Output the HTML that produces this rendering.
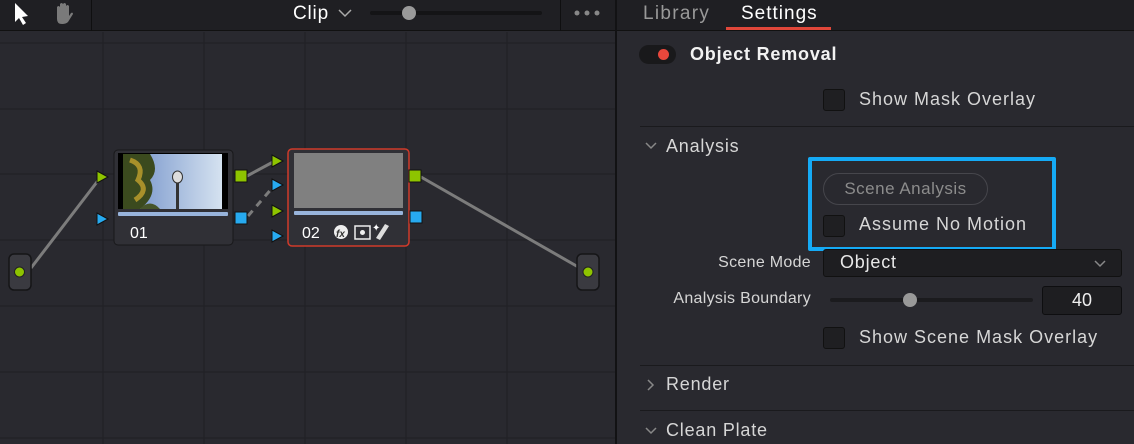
<!DOCTYPE html>
<html><head><style>
*{margin:0;padding:0;box-sizing:border-box}
body{width:1134px;height:444px;overflow:hidden;background:#29292f;font-family:"Liberation Sans","DejaVu Sans",sans-serif;position:relative;color:#d8d8d8}
.a{position:absolute}
.cb{position:absolute;width:22px;height:22px;background:#1f1f22;border:1px solid #111;border-radius:3px}
.lbl{position:absolute;font-size:18px;color:#d6d6d6;white-space:nowrap;letter-spacing:0.8px}
.hr{position:absolute;left:640px;right:0;height:1px;background:#1a1a1d}
</style></head><body>
<div class="a" style="left:0;top:0;width:1134px;height:31px;background:#1f1f23;border-bottom:1px solid #111"></div>
<div class="a" style="left:91px;top:0;width:1px;height:31px;background:#0f0f10"></div>
<div class="a" style="left:560px;top:0;width:1px;height:31px;background:#0f0f10"></div>
<div class="a" style="left:615px;top:0;width:2px;height:444px;background:#121214"></div>
<svg class="a" style="left:0;top:0" width="615" height="444">
<g stroke="#222226" stroke-width="1.2">
<line x1="103" y1="32" x2="103" y2="444"/><line x1="204" y1="32" x2="204" y2="444"/><line x1="305" y1="32" x2="305" y2="444"/><line x1="406" y1="32" x2="406" y2="444"/><line x1="507" y1="32" x2="507" y2="444"/>
<line x1="0" y1="43" x2="615" y2="43"/><line x1="0" y1="109" x2="615" y2="109"/><line x1="0" y1="174" x2="615" y2="174"/><line x1="0" y1="240" x2="615" y2="240"/><line x1="0" y1="306" x2="615" y2="306"/><line x1="0" y1="372" x2="615" y2="372"/><line x1="0" y1="438" x2="615" y2="438"/>
</g>
<path d="M15 3 L15 22 L19 18 L23 25 L26 23 L22 17 L28 16 Z" fill="#fff"/>
<path d="M57 14 L57 7 Q58.5 5 60 7 L60 13 L60 4 Q61.5 2 63 4 L63 12 L63 4 Q64.5 2 66 4 L66 13 L66 6 Q67.5 4 69 6 L69 16 L71 13 Q73 12 73 14 L68 22 Q66 24 62 24 Q57 24 57 19 Z" fill="#7a7a7a"/>
<line x1="372" y1="13" x2="540" y2="13" stroke="#141416" stroke-width="4" stroke-linecap="round"/>
<circle cx="409" cy="13" r="7" fill="#9a9a9a"/>
<path d="M339 10 L345 16 L351 10" stroke="#aaa" stroke-width="1.5" fill="none"/>
<circle cx="577" cy="13" r="2.5" fill="#888"/><circle cx="587" cy="13" r="2.5" fill="#888"/><circle cx="597" cy="13" r="2.5" fill="#888"/>
<g stroke="#7c7c7c" stroke-width="3" fill="none">
<line x1="31" y1="268" x2="100" y2="178"/><line x1="247" y1="176" x2="273" y2="162"/>
<line x1="248" y1="216" x2="273" y2="187" stroke-dasharray="7 6"/>
<line x1="421" y1="177" x2="580" y2="268"/>
</g>
<rect x="9" y="254" width="22" height="36" rx="5" fill="#3a3a40" stroke="#151517" stroke-width="1.5"/>
<circle cx="19.5" cy="272" r="5" fill="#8ec400" stroke="#222" stroke-width="1"/>
<rect x="577" y="254" width="22" height="36" rx="5" fill="#3a3a40" stroke="#151517" stroke-width="1.5"/>
<circle cx="588" cy="272" r="5" fill="#8ec400" stroke="#222" stroke-width="1"/>
<rect x="114" y="150" width="119" height="95" rx="4" fill="#303036" stroke="#18181a"/>
<rect x="118" y="153" width="110" height="56" fill="#000"/>
<defs><linearGradient id="sky" x1="0" x2="1" y1="0" y2="0"><stop offset="0" stop-color="#6f8fc8"/><stop offset="1" stop-color="#d5e2f0"/></linearGradient></defs>
<rect x="123" y="154" width="99" height="55" fill="url(#sky)"/>
<path d="M123 154 L150 154 Q160 170 150 180 Q158 195 140 209 L123 209 Z" fill="#3b4a1e"/>
<path d="M130 160 Q145 165 138 180 Q150 190 135 200" stroke="#a8902a" stroke-width="5" fill="none"/>
<path d="M140 209 Q150 198 160 209 Z" fill="#46552a"/>
<rect x="176" y="180" width="3" height="29" fill="#333"/>
<ellipse cx="177.5" cy="177" rx="5" ry="6" fill="#ddd" stroke="#333"/>
<rect x="118" y="212" width="110" height="4" rx="1" fill="#98b4dc"/>
<text x="130" y="238" font-size="16" fill="#fff">01</text>
<rect x="288" y="149" width="121" height="97" rx="4" fill="#303036" stroke="#d03a2a" stroke-width="1.5"/>
<rect x="294" y="153" width="109" height="55" fill="#808080"/>
<rect x="294" y="211" width="109" height="4" rx="1" fill="#98b4dc"/>
<text x="302" y="238" font-size="16" fill="#fff">02</text>
<circle cx="341" cy="232" r="7" fill="#eee"/><text x="336" y="237" font-size="10" font-style="italic" font-weight="bold" fill="#333">fx</text>
<rect x="355" y="226" width="15" height="13" fill="none" stroke="#eee" stroke-width="1.5"/><circle cx="362.5" cy="232.5" r="2.5" fill="#eee"/>
<path d="M376 238 L385 224 L389 226 L380 240 Z" fill="#ddd"/><text x="372" y="231" font-size="10" fill="#fff">✦</text>
<g stroke="#111" stroke-width="1">
<path d="M97 171 L108 177 L97 183 Z" fill="#8ec400"/><path d="M97 213 L108 219 L97 225 Z" fill="#27aaf0"/>
<rect x="235" y="170" width="12" height="12" fill="#8ec400"/><rect x="235" y="212" width="12" height="12" fill="#27aaf0"/>
<path d="M272 155 L283 161 L272 167 Z" fill="#8ec400"/><path d="M272 179 L283 185 L272 191 Z" fill="#27aaf0"/>
<path d="M272 205 L283 211 L272 217 Z" fill="#8ec400"/><path d="M272 230 L283 236 L272 242 Z" fill="#27aaf0"/>
<rect x="409" y="170" width="12" height="12" fill="#8ec400"/><rect x="410" y="211" width="12" height="12" fill="#27aaf0"/>
</g>
</svg>
<div class="lbl" style="left:293px;top:3px;font-size:19px;color:#fff">Clip</div>
<div class="lbl" style="left:643px;top:3px;font-size:19px;color:#999;letter-spacing:1.3px">Library</div>
<div class="lbl" style="left:741px;top:3px;font-size:19px;color:#fff;letter-spacing:1px">Settings</div>
<div class="a" style="left:726px;top:27px;width:105px;height:3px;background:#e0473a"></div>

<div class="a" style="left:639px;top:45px;width:37px;height:19px;border-radius:10px;background:#19191b"></div>
<div class="a" style="left:658px;top:49px;width:11px;height:11px;border-radius:50%;background:#e8473c"></div>
<div class="lbl" style="left:690px;top:44px;font-weight:bold;color:#f2f2f2">Object Removal</div>
<div class="cb" style="left:823px;top:89px"></div>
<div class="lbl" style="left:859px;top:89px;letter-spacing:1px">Show Mask Overlay</div>
<div class="hr" style="top:126px"></div>
<svg class="a" style="left:644px;top:141px" width="14" height="10"><path d="M2 2 L7 7 L12 2" stroke="#888" stroke-width="1.5" fill="none"/></svg>
<div class="lbl" style="left:666px;top:136px">Analysis</div>
<div class="a" style="left:808px;top:157px;width:248px;height:94px;border:4px solid #15aaf5;border-radius:2px"></div>
<div class="a" style="left:823px;top:173px;width:165px;height:32px;border:1px solid #46464c;border-radius:16px;color:#8c8c8c;font-size:17px;text-align:center;line-height:30px;letter-spacing:0.5px">Scene Analysis</div>
<div class="cb" style="left:823px;top:215px"></div>
<div class="lbl" style="left:859px;top:214px;letter-spacing:1px">Assume No Motion</div>
<div class="lbl" style="left:600px;width:211px;text-align:right;top:254px;font-size:16px;letter-spacing:0.3px">Scene Mode</div>
<div class="a" style="left:823px;top:249px;width:299px;height:28px;background:#1e1e21;border:1px solid #111;border-radius:3px"></div>
<div class="lbl" style="left:840px;top:252px;color:#e8e8e8">Object</div>
<svg class="a" style="left:1093px;top:259px" width="14" height="10"><path d="M2 2 L7 7 L12 2" stroke="#888" stroke-width="1.5" fill="none"/></svg>
<div class="lbl" style="left:600px;width:211px;text-align:right;top:290px;font-size:16px;letter-spacing:0.3px">Analysis Boundary</div>
<div class="a" style="left:830px;top:298px;width:203px;height:4px;border-radius:2px;background:#1b1b1e"></div>
<div class="a" style="left:903px;top:293px;width:14px;height:14px;border-radius:50%;background:#999"></div>
<div class="a" style="left:1042px;top:286px;width:80px;height:29px;background:#1e1e21;border:1px solid #0e0e10;border-radius:3px;text-align:center;line-height:27px;font-size:18px;color:#eee">40</div>
<div class="cb" style="left:823px;top:327px"></div>
<div class="lbl" style="left:859px;top:327px;letter-spacing:1px">Show Scene Mask Overlay</div>
<div class="hr" style="top:365px"></div>
<svg class="a" style="left:646px;top:378px" width="10" height="14"><path d="M2 2 L7 7 L2 12" stroke="#888" stroke-width="1.5" fill="none"/></svg>
<div class="lbl" style="left:666px;top:374px">Render</div>
<div class="hr" style="top:410px"></div>
<svg class="a" style="left:644px;top:426px" width="14" height="10"><path d="M2 2 L7 7 L12 2" stroke="#888" stroke-width="1.5" fill="none"/></svg>
<div class="lbl" style="left:666px;top:420px">Clean Plate</div>
</body></html>
